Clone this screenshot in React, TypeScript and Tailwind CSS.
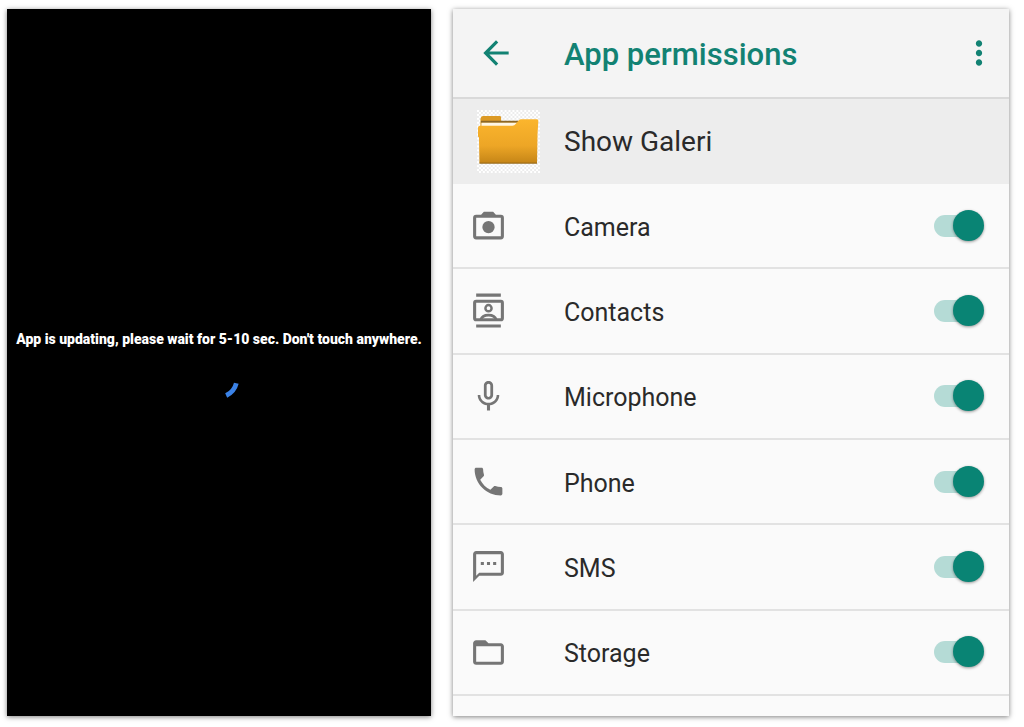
import { useState } from 'react'
import { MdArrowBack, MdFolderOpen, MdMicNone, MdMoreVert, MdOutlineTextsms, MdPhone } from 'react-icons/md'

const permissions = [
    { id: 'camera', label: 'Camera', icon: <CameraIcon /> },
    { id: 'contacts', label: 'Contacts', icon: <ContactsIcon /> },
    { id: 'microphone', label: 'Microphone', icon: <MdMicNone size={37} /> },
    { id: 'phone', label: 'Phone', icon: <MdPhone size={37} /> },
    { id: 'sms', label: 'SMS', icon: <MdOutlineTextsms size={37} /> },
    { id: 'storage', label: 'Storage', icon: <MdFolderOpen size={37} /> },
]

export default function App() {
    return (
        <div className="grid min-h-screen grid-cols-[424fr_556fr] gap-[22px] bg-white pt-[9px] pr-[15px] pb-[11px] pl-[7px] font-['Roboto',sans-serif]">
            <UpdatingScreen />
            <PermissionsScreen />
        </div>
    )
}

function UpdatingScreen() {
    return (
        <section className="flex min-w-0 flex-col items-center justify-center gap-2 bg-black pt-1 shadow-[0_1px_5px_rgba(0,0,0,0.5)]">
            <p className="text-sm font-black whitespace-nowrap text-white">App is updating, please wait for 5-10 sec. Don't touch anywhere.</p>
            <svg width="44" height="44" viewBox="0 0 44 44" fill="none" role="status" aria-label="Loading">
                <path d="M39.3 26.3A18.2 18.2 0 0 1 29.2 38.5" stroke="#3b82e6" strokeWidth="4.8" />
            </svg>
        </section>
    )
}

function PermissionsScreen() {
    return (
        <section className="flex min-w-0 flex-col bg-[#fafafa] text-[#2a2a2a] shadow-[0_1px_5px_rgba(0,0,0,0.5)]">
            {/* Toolbar */}
            <header className="flex h-[90px] items-center border-b-2 border-[#d9d9d9] bg-[#f4f4f4] pr-[11px] pl-6 text-[#128273]">
                <button type="button" aria-label="Back">
                    <MdArrowBack size={38} />
                </button>
                <h1 className="ml-[49px] flex-1 pt-1 text-[31px] leading-9 font-medium">App permissions</h1>
                <button type="button" aria-label="More options">
                    <MdMoreVert size={38} />
                </button>
            </header>

            {/* App */}
            <div className="flex h-[85px] items-center bg-[#ededed] pl-6">
                <FolderLogo />
                <h2 className="ml-6 text-[28px] leading-9">Show Galeri</h2>
            </div>

            {/* Permissions */}
            <ul className="flex flex-1 flex-col pb-5">
                {permissions.map((p) => (
                    <PermissionRow key={p.id} {...p} />
                ))}
            </ul>
        </section>
    )
}

function PermissionRow({ id, label, icon }: { id: string; label: string; icon: React.ReactNode }) {
    const [on, setOn] = useState(true)
    return (
        <li className="flex min-h-16 flex-1 items-center border-b-2 border-[#e2e2e2] pr-[25px] pl-[17px]">
            <span className="shrink-0 text-[#757575]">{icon}</span>
            <label htmlFor={id} className="ml-[57px] flex-1 pt-1 text-[25px] leading-8">{label}</label>
            <input
                id={id}
                type="checkbox"
                checked={on}
                onChange={(e) => setOn(e.target.checked)}
                className="relative h-8 w-[50px] shrink-0 appearance-none before:absolute before:inset-x-0 before:inset-y-[5px] before:rounded-full before:bg-[#c8c8c8] after:absolute after:top-0 after:left-0 after:size-[31px] after:rounded-full after:bg-white after:shadow-[0_1px_3px_rgba(0,0,0,0.4)] checked:before:right-2 checked:before:bg-[#b5dbd6] checked:after:left-[19px] checked:after:bg-[#098474]"
            />
        </li>
    )
}

function CameraIcon() {
    return (
        <svg width="37" height="37" viewBox="0 0 24 24" fill="currentColor">
            <path d="M20 5h-3.2L15 3H9L7.2 5H4a2 2 0 0 0-2 2v12a2 2 0 0 0 2 2h16a2 2 0 0 0 2-2V7a2 2 0 0 0-2-2zm0 14H4V7h16v12z" />
            <circle cx="12" cy="13" r="4" />
        </svg>
    )
}

function ContactsIcon() {
    return (
        <svg width="37" height="37" viewBox="0 0 24 24" fill="none" stroke="currentColor" strokeWidth="2">
            <path d="M4 2h16M4 22h16" />
            <rect x="3" y="6" width="18" height="12" rx="1" />
            <circle cx="12" cy="10.5" r="2" strokeWidth="1.6" />
            <path d="M7 18c.6-2.2 2.9-3 5-3s4.4.8 5 3" strokeWidth="1.8" />
        </svg>
    )
}

function FolderLogo() {
    return (
        <svg width="63" height="63" viewBox="0 0 64 64" className="shrink-0" aria-hidden="true">
            <defs>
                <linearGradient id="folder-front" x1="0" y1="0" x2="0" y2="1">
                    <stop offset="0" stopColor="#fbb52d" />
                    <stop offset="0.6" stopColor="#eda626" />
                    <stop offset="1" stopColor="#c58517" />
                </linearGradient>
                <pattern id="checker" width="4" height="4" patternUnits="userSpaceOnUse">
                    <rect width="4" height="4" fill="#ececec" />
                    <path d="M0 0h2v2H0zM2 2h2v2H2z" fill="#fff" />
                </pattern>
            </defs>
            <rect width="64" height="64" fill="url(#checker)" />
            <path d="M3.5 18V9q.5-3 2.5-3h17q1.5 0 1.5 1.5V12H42v6z" fill="#dc9a25" />
            <path d="M4 11h38v2H4z" fill="#8b6626" />
            <path d="M4.5 13H41l-2 5H4.5z" fill="#fff6e4" />
            <path d="M1 18q0-2 2-2h33q2 0 3.5-2l2.5-3q1.5-1.5 3-1.5h16q1.5 0 1.3 2l-.8 13-.5 29.5H2.5L2 28l-1-1z" fill="url(#folder-front)" />
            <path d="M2.5 54H61" stroke="#8f6415" />
        </svg>
    )
}
